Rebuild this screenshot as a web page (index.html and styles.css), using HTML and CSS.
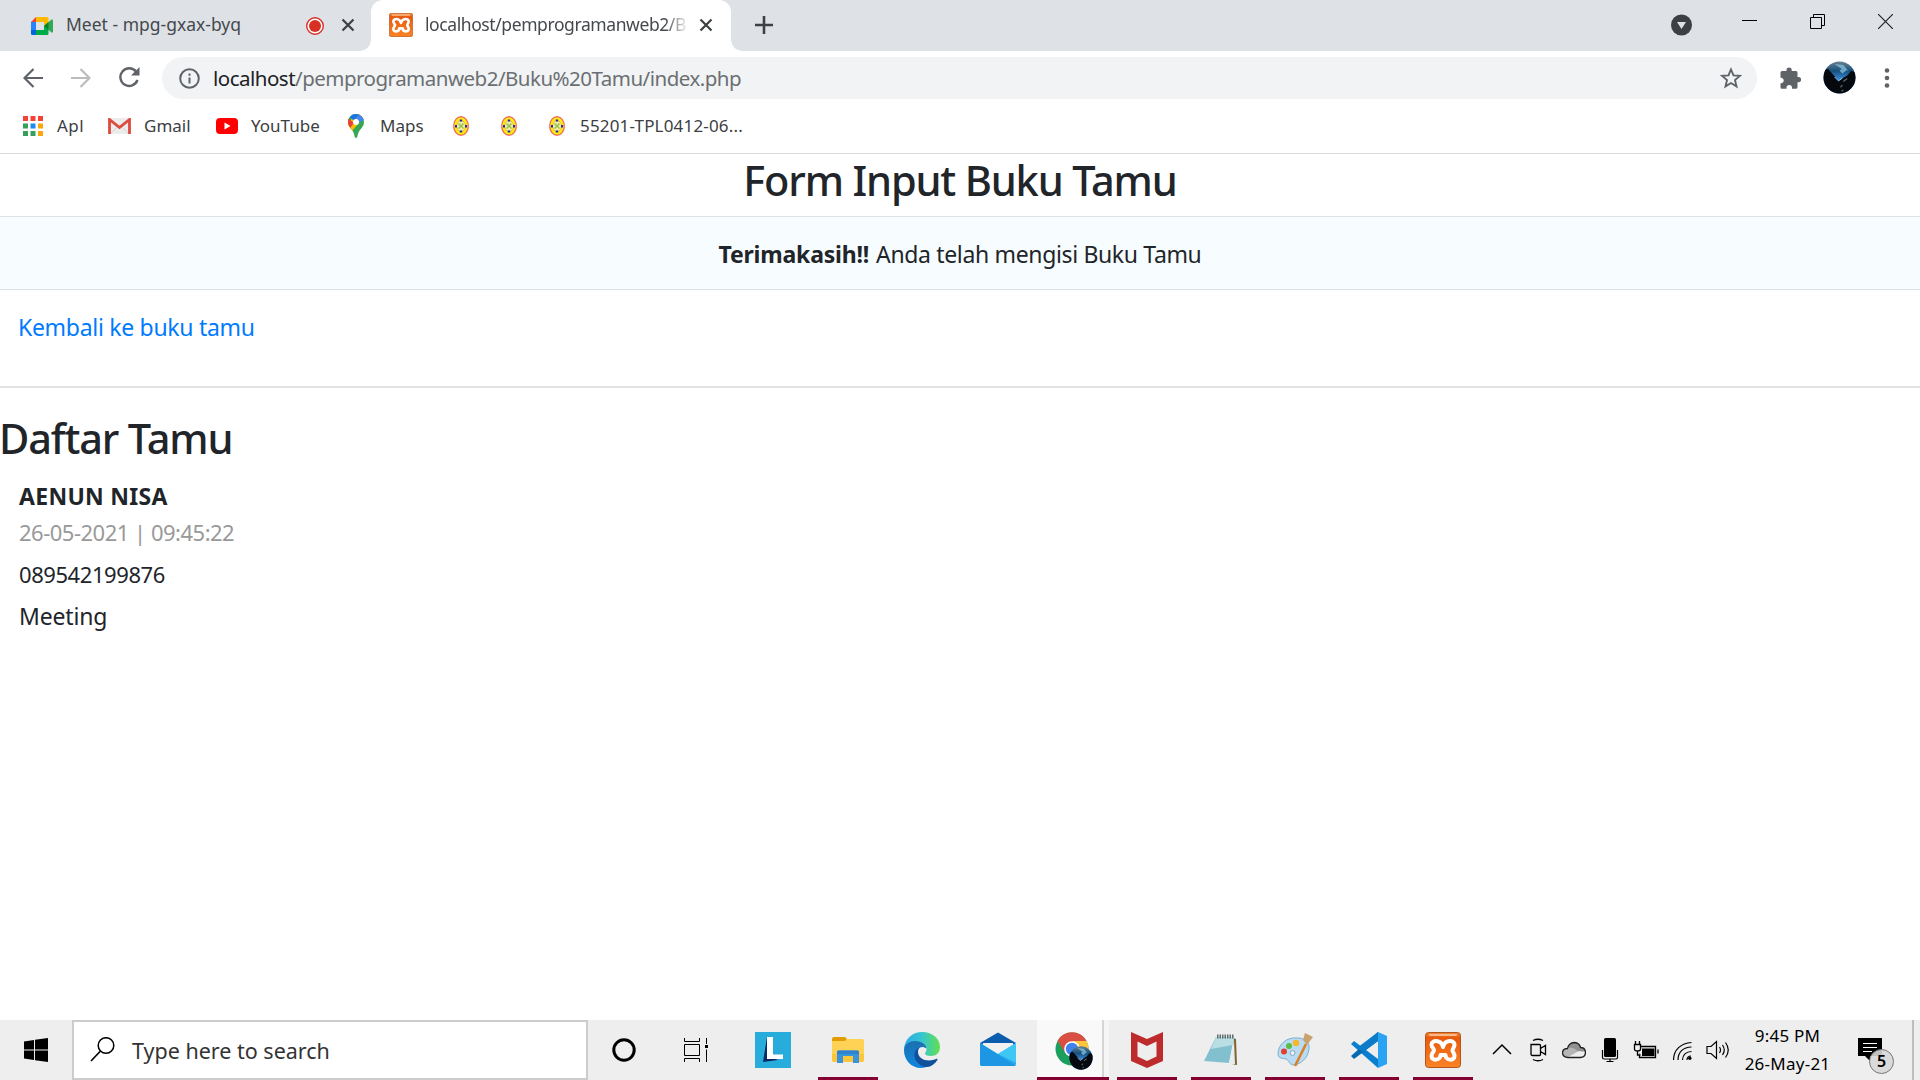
FILE: index.html
```html
<!DOCTYPE html>
<html lang="id">
<head>
<meta charset="utf-8">
<title>localhost/pemprogramanweb2/Buku%20Tamu/index.php</title>
<link rel="stylesheet" href="styles.css">
</head>
<body>
<svg class="defs" aria-hidden="true">
  <defs>
    <linearGradient id="orange" x1="0" y1="0" x2="0" y2="1"><stop offset="0" stop-color="#f08a3c"/><stop offset=".15" stop-color="#e8590c"/><stop offset="1" stop-color="#fb8326"/></linearGradient>
    <clipPath id="round"><circle cx="17" cy="17" r="16.5"/></clipPath>
    <linearGradient id="sky" x1="0" y1="0" x2="0" y2="1"><stop offset="0" stop-color="#6d8490"/><stop offset=".3" stop-color="#17507c"/><stop offset=".6" stop-color="#3a93e6"/></linearGradient>
    <symbol id="xampp" viewBox="0 0 36 36">
      <rect x=".5" y=".5" width="35" height="35" rx="3" fill="url(#orange)" stroke="#b3541a"/>
      <rect x="4" y="2" width="28" height="2" rx="1" fill="#f9b98a"/>
      <path d="M18 15C16 7 6.500 8 6.500 12.500C6.500 15.500 9 16.500 9 18.300C9 20 6.500 21 6.500 24C6.500 29 15.500 29 15.500 23H20.500C20.500 29 29.500 29 29.500 24C29.500 21 27.500 20 27.500 18.300C27.500 16.500 29.500 15.500 29.500 12.500C29.500 8 20 7 18 15Z" fill="none" stroke="#fff" stroke-width="4" stroke-linejoin="round"/>
    </symbol>
    <symbol id="avatar" viewBox="0 0 34 34">
      <g clip-path="url(#round)">
        <rect width="34" height="34" fill="url(#sky)"/>
        <path d="M12 3l9 1 5 6-7-2zM17 10l5-4 3 3-5 4z" fill="#8fc7e6" opacity=".7"/>
        <path d="M0 10l5-2 11 12 9-5 4-5 5 2v22H0z" fill="#05080c"/>
        <path d="M12 16.500l4 4 4-3" fill="none" stroke="#9fd4ff"/>
        <path d="M21 21l4-3M18 27l2-2M19 31l2-1" stroke="#52606c" stroke-width="1.500"/>
      </g>
    </symbol>
    <symbol id="seal" viewBox="0 0 16 20">
      <ellipse cx="8" cy="10" rx="7.300" ry="9.300" fill="#ffee0c" stroke="#f0735a" stroke-width="1.400"/>
      <ellipse cx="8" cy="10" rx="4.500" ry="5.500" fill="#f3e9a0" stroke="#e0b040" stroke-width=".8"/>
      <path d="M5.500 7.500l5 5m0-5l-5 5" stroke="#8cc63f" stroke-width="1.300"/>
      <path d="M6.800 3.500h2.400v2H6.800zM6.800 14.500h2.400v2H6.800zM2 9h2v2.400H2zM12 9h2v2.400h-2z" fill="#2a2aa8"/>
    </symbol>
  </defs>
</svg>

<header class="browser">
  <div class="tabstrip">
    <div class="tab">
      <svg width="22" height="18" viewBox="0 0 22 18"><path d="M0 5h5v8H0z" fill="#2684fc"/><path d="M0 5l5-5v5z" fill="#ea4335"/><path d="M5 0h11q1.500 0 1.500 1.500V8l-4.500 1V5H5z" fill="#ffba00"/><path d="M0 13h5v5H1.500Q0 18 0 16.500z" fill="#0066da"/><path d="M5 13h8V9l4.500-1v8.500q0 1.500-1.500 1.500H5z" fill="#00ac47"/><path d="M13 9l7.500-6.500q1.500-.5 1.500 1v11q0 1.500-1.500 1L13 9z" fill="#34a853"/><path d="M13 9l4.500-4v8z" fill="#00832d"/></svg>
      <span class="tab-title t-meet">Meet - mpg-gxax-byq</span>
      <svg width="18" height="18" viewBox="0 0 18 18"><circle cx="9" cy="9" r="8.300" fill="#fff" stroke="#d93025" stroke-width="1.400"/><circle cx="9" cy="9" r="6" fill="#d93025"/></svg>
      <svg class="x1" width="14" height="14" viewBox="0 0 14 14"><path d="M1.500 1.500l11 11m0-11l-11 11" stroke="#3c4043" stroke-width="2.200"/></svg>
    </div>
    <div class="tab active">
      <svg class="fav" width="24" height="24"><use href="#xampp"/></svg>
      <span class="tab-title t-local">localhost/pemprogramanweb2/B</span>
      <svg class="x2" width="14" height="14" viewBox="0 0 14 14"><path d="M1.500 1.500l11 11m0-11l-11 11" stroke="#3c4043" stroke-width="2.200"/></svg>
    </div>
    <svg class="plus" width="18" height="18" viewBox="0 0 18 18"><path d="M9 0v18M0 9h18" stroke="#3c4043" stroke-width="2.600"/></svg>
    <div class="window-buttons">
      <svg class="drop" width="21" height="22" viewBox="0 0 21 22"><circle cx="10.500" cy="11" r="10.500" fill="#3c4043"/><path d="M6 8h9l-4.500 7z" fill="#dee1e6"/></svg>
      <svg width="15" height="15" viewBox="0 0 15 15"><path d="M0 6.500h15" stroke="#000"/></svg>
      <svg width="15" height="15" viewBox="0 0 15 15"><path d="M.5 3.500h11v11H.5zM3.500 3V.5h11v11H12" fill="none" stroke="#000"/></svg>
      <svg width="15" height="15" viewBox="0 0 15 15"><path d="M0 0l15 15M15 0L0 15" stroke="#222" stroke-width="1.200"/></svg>
    </div>
  </div>

  <div class="toolbar">
    <svg width="20" height="20" viewBox="0 0 20 20"><path d="M20 10H2M10.500 1L1.500 10l9 9" fill="none" stroke="#5f6368" stroke-width="2.200"/></svg>
    <svg width="20" height="20" viewBox="0 0 20 20"><path d="M0 10h18M9.500 1l9 9-9 9" fill="none" stroke="#babcbe" stroke-width="2.200"/></svg>
    <svg width="21" height="21" viewBox="0 0 21 21"><path d="M18.500 13A8.800 8.800 0 1 1 17 4.500" fill="none" stroke="#5f6368" stroke-width="2.400"/><path d="M20.500 0v8.500H12z" fill="#5f6368"/></svg>
    <div class="omnibox">
      <svg width="21" height="21" viewBox="0 0 21 21"><circle cx="10.500" cy="10.500" r="9.300" fill="none" stroke="#5f6368" stroke-width="2"/><path d="M10.500 9.500v6M10.500 5.500v2.200" stroke="#5f6368" stroke-width="2"/></svg>
      <span class="url"><b>localhost</b>/pemprogramanweb2/Buku%20Tamu/index.php</span>
      <svg class="star" width="22" height="22" viewBox="0 0 22 22"><path d="M11 2.500l2.500 5.900 6.400.5-4.900 4.200 1.500 6.300-5.500-3.400-5.500 3.400L7 13.100 2.100 8.900l6.400-.5z" fill="none" stroke="#5f6368" stroke-width="1.900"/></svg>
    </div>
    <svg class="puzzle" width="22" height="22" viewBox="0 0 22 22"><path d="M2 4h4.500V3a2.600 2.600 0 0 1 5.200 0v1H16q1.500 0 1.500 1.500V10h1a2.600 2.600 0 0 1 0 5.200h-1v5q0 1.500-1.500 1.500h-4v-1a2.700 2.700 0 0 0-5.500 0v1H2Q.5 21.700.5 20.200v-4h1a2.800 2.800 0 0 0 0-5.500h-1V5.500Q.5 4 2 4z" fill="#5f6368"/></svg>
    <svg class="me" width="33" height="33"><use href="#avatar"/></svg>
    <svg width="6" height="22" viewBox="0 0 6 22"><g fill="#5f6368"><circle cx="3" cy="3.500" r="2.300"/><circle cx="3" cy="11" r="2.300"/><circle cx="3" cy="18.500" r="2.300"/></g></svg>
  </div>

  <nav class="bookmarks">
    <a class="bm b-apps"><svg width="20" height="20" viewBox="0 0 20 20"><path d="M0 0h5v5H0zM7.500 0h5v5h-5zM15 0h5v5h-5z" fill="#f44336"/><path d="M0 7.500h5v5H0zM0 15h5v5H0zM7.500 15h5v5h-5z" fill="#34a05a"/><path d="M7.500 7.500h5v5h-5z" fill="#1e88f5"/><path d="M15 7.500h5v5h-5zM15 15h5v5h-5z" fill="#f9a80c"/></svg><span>Apl</span></a>
    <a class="bm b-gmail"><svg width="23" height="16" viewBox="0 0 23 16"><path d="M1 0h21v16H1z" fill="#ececec"/><path d="M3 15l8.500-8 8.500 8" fill="none" stroke="#d5d5d5"/><path d="M1.500 16V1.500l10 8 10-8V16" fill="none" stroke="#dd4b3e" stroke-width="2.800"/></svg><span>Gmail</span></a>
    <a class="bm b-yt"><svg width="22" height="16" viewBox="0 0 22 16"><rect width="22" height="16" rx="4" fill="#f00"/><path d="M8.500 4.500v7l6-3.500z" fill="#fff"/></svg><span>YouTube</span></a>
    <a class="bm b-maps"><svg width="16" height="24" viewBox="0 0 16 24"><clipPath id="pin"><path d="M8 0a8 8 0 0 1 8 8c0 5-4 7-5.500 10.500C9.500 21 9.500 24 8 24s-1.500-3-2.500-5.500C4 15 0 13 0 8a8 8 0 0 1 8-8z"/></clipPath><g clip-path="url(#pin)"><path d="M0 0h16v24H0z" fill="#34a853"/><path d="M0 14V9l8-9h8v3L4 17z" fill="#fbbc04"/><path d="M0 4l6 5-4 5H0z" fill="#ea4335"/><path d="M2 3l4 4 6-7H4z" fill="#1a73e8"/><path d="M8 5l4-5 4 4v2l-6 3z" fill="#4285f4"/></g><circle cx="8" cy="8" r="3" fill="#fff"/></svg><span>Maps</span></a>
    <a class="bm b-seal"><svg width="16" height="20"><use href="#seal"/></svg></a>
    <a class="bm b-seal"><svg width="16" height="20"><use href="#seal"/></svg></a>
    <a class="bm b-seal"><svg width="16" height="20"><use href="#seal"/></svg><span>55201-TPL0412-06...</span></a>
  </nav>
</header>

<main class="page">
  <h1 class="title">Form Input Buku Tamu</h1>
  <div class="alert"><b>Terimakasih!!</b><span>Anda telah mengisi Buku Tamu</span></div>
  <div class="back"><a>Kembali ke buku tamu</a></div>
  <h1 class="list-title">Daftar Tamu</h1>
  <section class="guest">
    <b class="name">AENUN NISA</b>
    <span class="date">26-05-2021 | 09:45:22</span>
    <span class="phone">089542199876</span>
    <span class="need">Meeting</span>
  </section>
</main>

<footer class="taskbar">
  <div class="start"><svg width="24" height="24" viewBox="0 0 24 24"><path d="M0 3.500l10-1.500v9.500H0zM11 1.800L24 0v11.500H11zM0 12.500h10V22L0 20.500zM11 12.500h13V24l-13-1.800z"/></svg></div>
  <div class="search">
    <svg width="25" height="25" viewBox="0 0 25 25"><circle cx="16" cy="8.500" r="7.800" fill="none" stroke="#000" stroke-width="1.500"/><path d="M10.500 14L1 24" stroke="#000" stroke-width="1.700"/></svg>
    <span>Type here to search</span>
  </div>
  <div class="cell sys"><svg width="24" height="24" viewBox="0 0 24 24"><circle cx="12" cy="12" r="10.200" fill="none" stroke="#000" stroke-width="3"/></svg></div>
  <div class="cell sys"><svg width="24" height="24" viewBox="0 0 24 24"><path d="M.5 0v3.500h15V0M.5 6.500h15v11H.5zM.5 24v-3.500h15V24M22.500 0v6M22.500 11.500V24" fill="none" stroke="#000"/><path d="M21 7h3v3h-3z"/></svg></div>
  <div class="cell first"><svg width="36" height="36" viewBox="0 0 36 36"><path d="M0 0h36v36H0z" fill="#28acdb"/><path d="M12 5L8 30l15-2-9-4z" fill="#0a2a66"/><path d="M12 5h6v17.500h10V27H12z" fill="#fff"/></svg></div>
  <div class="cell on folder"><svg width="36" height="36" viewBox="0 0 36 36"><path d="M2 7q0-2 2-2h11l2 2-2 3H2z" fill="#e19c00"/><path d="M2 9h13l2-2h15q2 0 2 2v19q0 2-2 2H4q-2 0-2-2z" fill="#ffd255"/><path d="M2 22h32v6q0 2-2 2H4q-2 0-2-2z" fill="#fcc63b"/><path d="M7 31V20q0-1.500 1.500-1.500h19Q29 18.500 29 20v11h-6v-7H13v7z" fill="#3a93dd"/><path d="M7 22v-2q0-1.500 1.500-1.500h19Q29 18.500 29 20v2z" fill="#2f83cf"/></svg></div>
  <div class="cell"><svg width="36" height="36" viewBox="0 0 36 36"><defs><linearGradient id="e1"><stop offset="0" stop-color="#2aa8e8"/><stop offset=".5" stop-color="#36c5d0"/><stop offset="1" stop-color="#62e04e"/></linearGradient><linearGradient id="e2" x1="0" y1="0" x2="0" y2="1"><stop offset="0" stop-color="#1b6fae"/><stop offset="1" stop-color="#0f86e0"/></linearGradient></defs><path d="M0 17C1 6 9 0 18 0c11 0 18 7 18 15 0 6-4 9-9 9-4 0-6-1.500-6-2.500s1.500-1.500 1.500-4.500c0-4-4-7-10-7C6 10 2 13 0 17z" fill="url(#e1)"/><path d="M0 18c0-5 5-9 11-9 7 0 11.500 4 11.500 7.500-5-4-10 0-9 6C14.500 29 20 32 24 34c-2 1-4 2-7 2C7 36 0 28 0 18z" fill="url(#e2)"/><path d="M15 15.500C10 18 9 25 13 30c4 5 10 6 14 4 4-2 6-5 6.500-6.500.3-1-.5-1-1-.7C24 31 14 27 14 20c0-2 .5-3.500 1-4.500z" fill="#10509d"/></svg></div>
  <div class="cell mail"><svg width="36" height="36" viewBox="0 0 36 36"><path d="M0 11L18 .5 36 11l-10 6H10z" fill="#0b5cad"/><path d="M3 11h30v12H3z" fill="#f1f1f1"/><path d="M0 11l18 11L36 11v21q0 2-2 2H2q-2 0-2-2z" fill="#29a9ea"/><path d="M18 22l18-11v20z" fill="#3cc7f5"/><path d="M0 11l36 23H2q-2 0-2-2z" fill="#1d97e3"/></svg></div>
  <div class="cell chrome"><svg width="40" height="40" viewBox="0 0 40 40"><circle cx="18" cy="19" r="16.500" fill="#1aa05c"/><path d="M3.500 11A16.500 16.500 0 0 1 32.500 11H18l-6 13z" fill="#d94f43"/><path d="M18 11h14.500a16.500 16.500 0 0 1-15 24.500L26 22z" fill="#fdc53a"/><circle cx="18" cy="19" r="7.800" fill="#fff"/><circle cx="18" cy="19" r="6.200" fill="#3e82ee"/><svg x="15" y="16" width="24" height="24"><use href="#avatar"/></svg></svg></div>
  <div class="cell on"><svg width="32" height="36" viewBox="0 0 32 36"><path d="M0 0l16 7 16-7v29l-16 7-16-7zM6.500 9.500v15L16 29l9.500-4.500v-15L16 14z" fill="#be2b2c" fill-rule="evenodd"/></svg></div>
  <div class="cell on"><svg width="36" height="36" viewBox="0 0 36 36"><path d="M30 6l3 1 1 26-8-1z" fill="#7c6534"/><path d="M31 6l-2 27-20-5z" fill="#f2f6f6"/><path d="M13 5h18l-5 26-25-2z" fill="#83c0cf"/><path d="M13 5h18l-1.500 8L8 17z" fill="#b9dfe4"/><path d="M26 31l5-22 1 23-3 1z" fill="#e8ecec"/><path d="M14 3.500h17M14 5.500h17" stroke="#5d6a6d" stroke-dasharray="1.500 1" stroke-width="2"/></svg></div>
  <div class="cell on"><svg width="36" height="36" viewBox="0 0 36 36"><path d="M1 22C1 12 10 5 20 6c8 0 13 4 12 11-1 9-8 15-15 16-5 0-5-5-8-6s-8 0-8-5z" fill="#b9dcf2" stroke="#79aed2"/><circle cx="15.500" cy="21" r="2.500" fill="#eee" stroke="#82aac4"/><circle cx="7" cy="19.500" r="3" fill="#e0402f"/><circle cx="12" cy="14" r="3" fill="#5dba42"/><circle cx="19" cy="11" r="3.200" fill="#f8b72a"/><path d="M29 12L18 34" stroke="#d98128" stroke-width="2.600"/><path d="M26 8l2-7 8 4-6 8z" fill="#c9a36c"/></svg></div>
  <div class="cell on"><svg width="36" height="36" viewBox="0 0 36 36"><path d="M0 12l3-3 24 18v9z" fill="#0a7fd0"/><path d="M0 24l3 3L27 9V0z" fill="#0569b2"/><path d="M27 0l9 4v28l-9 4z" fill="#2ba3f5"/><path d="M27 0v9L12 20l-6-4z" fill="#0a7cca"/></svg></div>
  <div class="cell on"><svg width="36" height="36"><use href="#xampp"/></svg></div>

  <div class="tray">
    <div class="ti"><svg width="24" height="24" viewBox="0 0 24 24"><path d="M3 16l9-9 9 9" fill="none" stroke="#000" stroke-width="1.500"/></svg></div>
    <div class="ti"><svg width="24" height="24" viewBox="0 0 24 24"><path d="M5 6.500h8.500q1 0 1 1v9q0 1-1 1h-7q-1.500 0-1.500-1.500zM14.500 10.500l5-3v9l-5-3M7 2.500q5-2.500 10 0M7 21.500q5 2.500 10 0" fill="none" stroke="#000" stroke-width="1.300"/></svg></div>
    <div class="ti"><svg width="24" height="24" viewBox="0 0 24 24"><path d="M6 19.500q-5.500-.5-5.500-5 .5-4 5-4 1-5.500 7-6 5 .5 6 5 5 0 5 5.500-.5 4-5 4.500z" fill="#b5b5b5"/><path d="M6.500 10q6-1 11 5l5.500-2.500Q22 9 18 9q-2-4-6-4t-5.500 5z" fill="#919191"/><path d="M6 19l11-6 6 1q0 5-5 5z" fill="#eee"/><path d="M6 19.500q-5.500-.5-5.500-5 .5-4 5-4 1-5.500 7-6 5 .5 6 5 5 0 5 5.500-.5 4-5 4.500z" fill="none" stroke="#222" stroke-width="1.300"/></svg></div>
    <div class="ti"><svg width="24" height="26" viewBox="0 0 24 26"><rect x="6" y="1" width="12" height="19" rx="1.500"/><path d="M4.500 13v7.500q0 1.500 1.500 1.500h12q1.500 0 1.500-1.500V13M12 22v2.500M8.500 24.500h7" fill="none" stroke="#000" stroke-width="1.200"/></svg></div>
    <div class="ti"><svg width="26" height="24" viewBox="0 0 26 24"><path d="M8 8.500h14.500v11H6.500v-4M25 11.500v4" fill="none" stroke="#000" stroke-width="1.300"/><path d="M9 10.500h12.500v7.500H9z"/><path d="M1.500 6.500h6v4.500q0 2-3 2t-3-2zM2.500 3v3.500M6.500 3v3.500M4.500 13v4h3" fill="#eee" stroke="#000" stroke-width="1.300"/></svg></div>
    <div class="ti"><svg width="24" height="24" viewBox="0 0 24 24"><path d="M3.500 22C3.500 12 11 5 21.500 4.500M8 22c0-7.500 5-13 13.500-13M12.500 22c0-5 3.500-8.500 9-8.500M17 22c0-2.500 1.500-4 4-4" fill="none" stroke="#000" stroke-width="1.200"/><circle cx="19.800" cy="20.300" r="1.700"/></svg></div>
    <div class="ti"><svg width="24" height="24" viewBox="0 0 24 24"><path d="M1 8.500h4l5.500-5v17l-5.500-5H1zM13.500 9q2 3 0 6M16.500 7q3.500 5 0 10M19.500 4.500q5.500 7.500 0 15" fill="none" stroke="#000" stroke-width="1.200"/></svg></div>
    <div class="clock"><span>9:45 PM</span><span>26-May-21</span></div>
    <div class="notify">
      <svg width="24" height="24" viewBox="0 0 24 24"><path d="M0 0h24v18H12v5l-5-5H0z"/><path d="M5 5.500h14M5 9.500h14M5 13.500h9" stroke="#fff" stroke-width="1.200"/></svg>
      <span class="badge">5</span>
    </div>
    <div class="peek"></div>
  </div>
</footer>
</body>
</html>
```
FILE: styles.css
```css
* { box-sizing: border-box; }
body { margin: 0; width: 1920px; height: 1080px; overflow: hidden; display: flex; flex-direction: column; background: #fff; color: #212529; font-family: "Noto Sans", "Open Sans", sans-serif; }
svg { display: block; flex: none; }
.defs { width: 0; height: 0; position: absolute; }
span, a, b { white-space: nowrap; }

.browser { height: 154px; border-bottom: 1px solid #d9dbde; }
.tabstrip { height: 51px; background: #dee1e6; display: flex; align-items: center; }
.tab { width: 371px; height: 51px; display: flex; align-items: center; padding-left: 31px; font-size: 17.5px; color: #45494d; }
.tab-title { overflow: hidden; line-height: 30px; }
.t-meet { width: 240px; margin: 0 0 3px 13px; }
.x1 { margin-left: 17px; margin-bottom: 1px; }
.tab.active { width: 360px; background: #fff; border-radius: 12px 12px 0 0; padding-left: 18px; position: relative; }
.tab.active::before, .tab.active::after { content: ""; position: absolute; bottom: 0; width: 11px; height: 11px; }
.tab.active::before { left: -11px; background: radial-gradient(circle at 0 0, #dee1e6 10.5px, #fff 11px); }
.tab.active::after { right: -11px; background: radial-gradient(circle at 100% 0, #dee1e6 10.5px, #fff 11px); }
.fav { margin-bottom: 1px; }
.t-local { width: 263px; margin: 0 0 3px 12px; letter-spacing: -0.41px; -webkit-mask-image: linear-gradient(90deg, #000 240px, transparent 264px); mask-image: linear-gradient(90deg, #000 240px, transparent 264px); }
.x2 { margin-left: 11px; margin-bottom: 1px; }
.plus { margin: 0 0 1px 24px; }
.window-buttons { margin-left: auto; display: flex; align-items: center; gap: 53px; padding: 0 27px 8px 0; }
.drop { margin: 7px -3px 0 0; }

.toolbar { height: 53px; display: flex; align-items: center; padding: 0 30px 0 23px; gap: 28px; }
.omnibox { width: 1596px; height: 42px; margin: 1px 0 0 -6px; padding: 0 15px 0 17px; border-radius: 21px; background: #f1f3f4; display: flex; align-items: center; }
.url { margin: 0 0 1px 13px; font-size: 20.5px; letter-spacing: -0.51px; color: #6b6f73; }
.url b { font-weight: 400; color: #202124; }
.star { margin-left: auto; }
.puzzle { margin-left: -5px; }
.me { margin-left: -7px; }

.bookmarks { height: 45px; display: flex; align-items: center; font-size: 17px; color: #3c4043; padding-left: 23px; }
.bm { display: flex; align-items: center; gap: 14px; }
.bm span { margin-bottom: 3px; }
.bm svg { margin-bottom: 1px; }
.b-apps span { letter-spacing: 0.5px; }
.b-apps { width: 85px; }
.b-gmail { width: 108px; gap: 13px; }
.b-yt { width: 132px; gap: 13px; }
.b-maps { width: 105px; gap: 16px; }
.b-seal { width: 48px; gap: 15px; }
.b-seal span { letter-spacing: 0.18px; }

.page { height: 866px; font-size: 23px; }
h1 { margin: 0; font-weight: 500; font-size: 41.5px; line-height: 50px; letter-spacing: -1.15px; }
.title { height: 62px; padding-top: 1px; text-align: center; }
.alert { height: 74px; border: solid #dee2e6; border-width: 1px 0; background: #f7fcff; display: flex; justify-content: center; align-items: center; gap: 7px; padding-top: 2px; }
.alert b { letter-spacing: -0.2px; }
.alert span { letter-spacing: -0.35px; }
.back { height: 98px; border-bottom: 2px solid #e3e3e4; padding: 20px 0 0 18px; color: #007bff; line-height: 34px; letter-spacing: -0.3px; }
.list-title { padding: 25px 0 0 0; height: 84px; margin-left: -1px; }
.guest { display: flex; flex-direction: column; padding-left: 19px; line-height: 36px; }
.name { height: 36px; margin-top: 6px; letter-spacing: 0.3px; }
.date { color: #999; font-size: 22px; height: 42px; letter-spacing: -0.5px; }
.phone { font-size: 22px; height: 42px; letter-spacing: -0.43px; }
.need { letter-spacing: -0.15px; }

.taskbar { height: 60px; background: #eee; display: flex; color: #000; }
.start { width: 72px; display: flex; align-items: center; justify-content: center; }
.search { width: 516px; border: 2px solid #ccc; background: #fff; display: flex; align-items: center; padding: 0 0 0 16px; gap: 17px; font-size: 21.5px; color: #333; }
.search svg { margin-bottom: 2px; }
.search span { padding-top: 1px; }
.cell { width: 74px; display: flex; align-items: center; justify-content: center; position: relative; }
.sys { width: 72px; }
.first { margin-left: 4px; }
.on::after { content: ""; position: absolute; bottom: 0; left: 7px; right: 7px; height: 3px; background: #850031; }
.folder { margin-left: 1px; }
.mail { margin: 0 2px 0 2px; }
.chrome { width: 72px; margin-right: 1px; background: linear-gradient(90deg, #f9f9f9 65px, #d5d5d5 65px, #d5d5d5 67px, #f5f5f5 67px); border-bottom: 3px solid #850031; padding: 3px 0 0 2px; }
.tray { margin-left: auto; width: 436px; display: flex; }
.ti { width: 36px; display: flex; align-items: center; justify-content: center; }
.clock { width: 103px; display: flex; flex-direction: column; align-items: center; font-size: 17px; line-height: 28px; padding-top: 2px; letter-spacing: 0.25px; }
.notify { width: 73px; padding: 18px 0 0 19px; position: relative; }
.badge { position: absolute; left: 30px; top: 29px; width: 25px; height: 25px; border: 1px solid #777; border-radius: 50%; background: rgba(215,215,215,.9); font-size: 16px; font-weight: 600; line-height: 23px; text-align: center; }
.peek { width: 2px; background: #bdbdbd; }
```
